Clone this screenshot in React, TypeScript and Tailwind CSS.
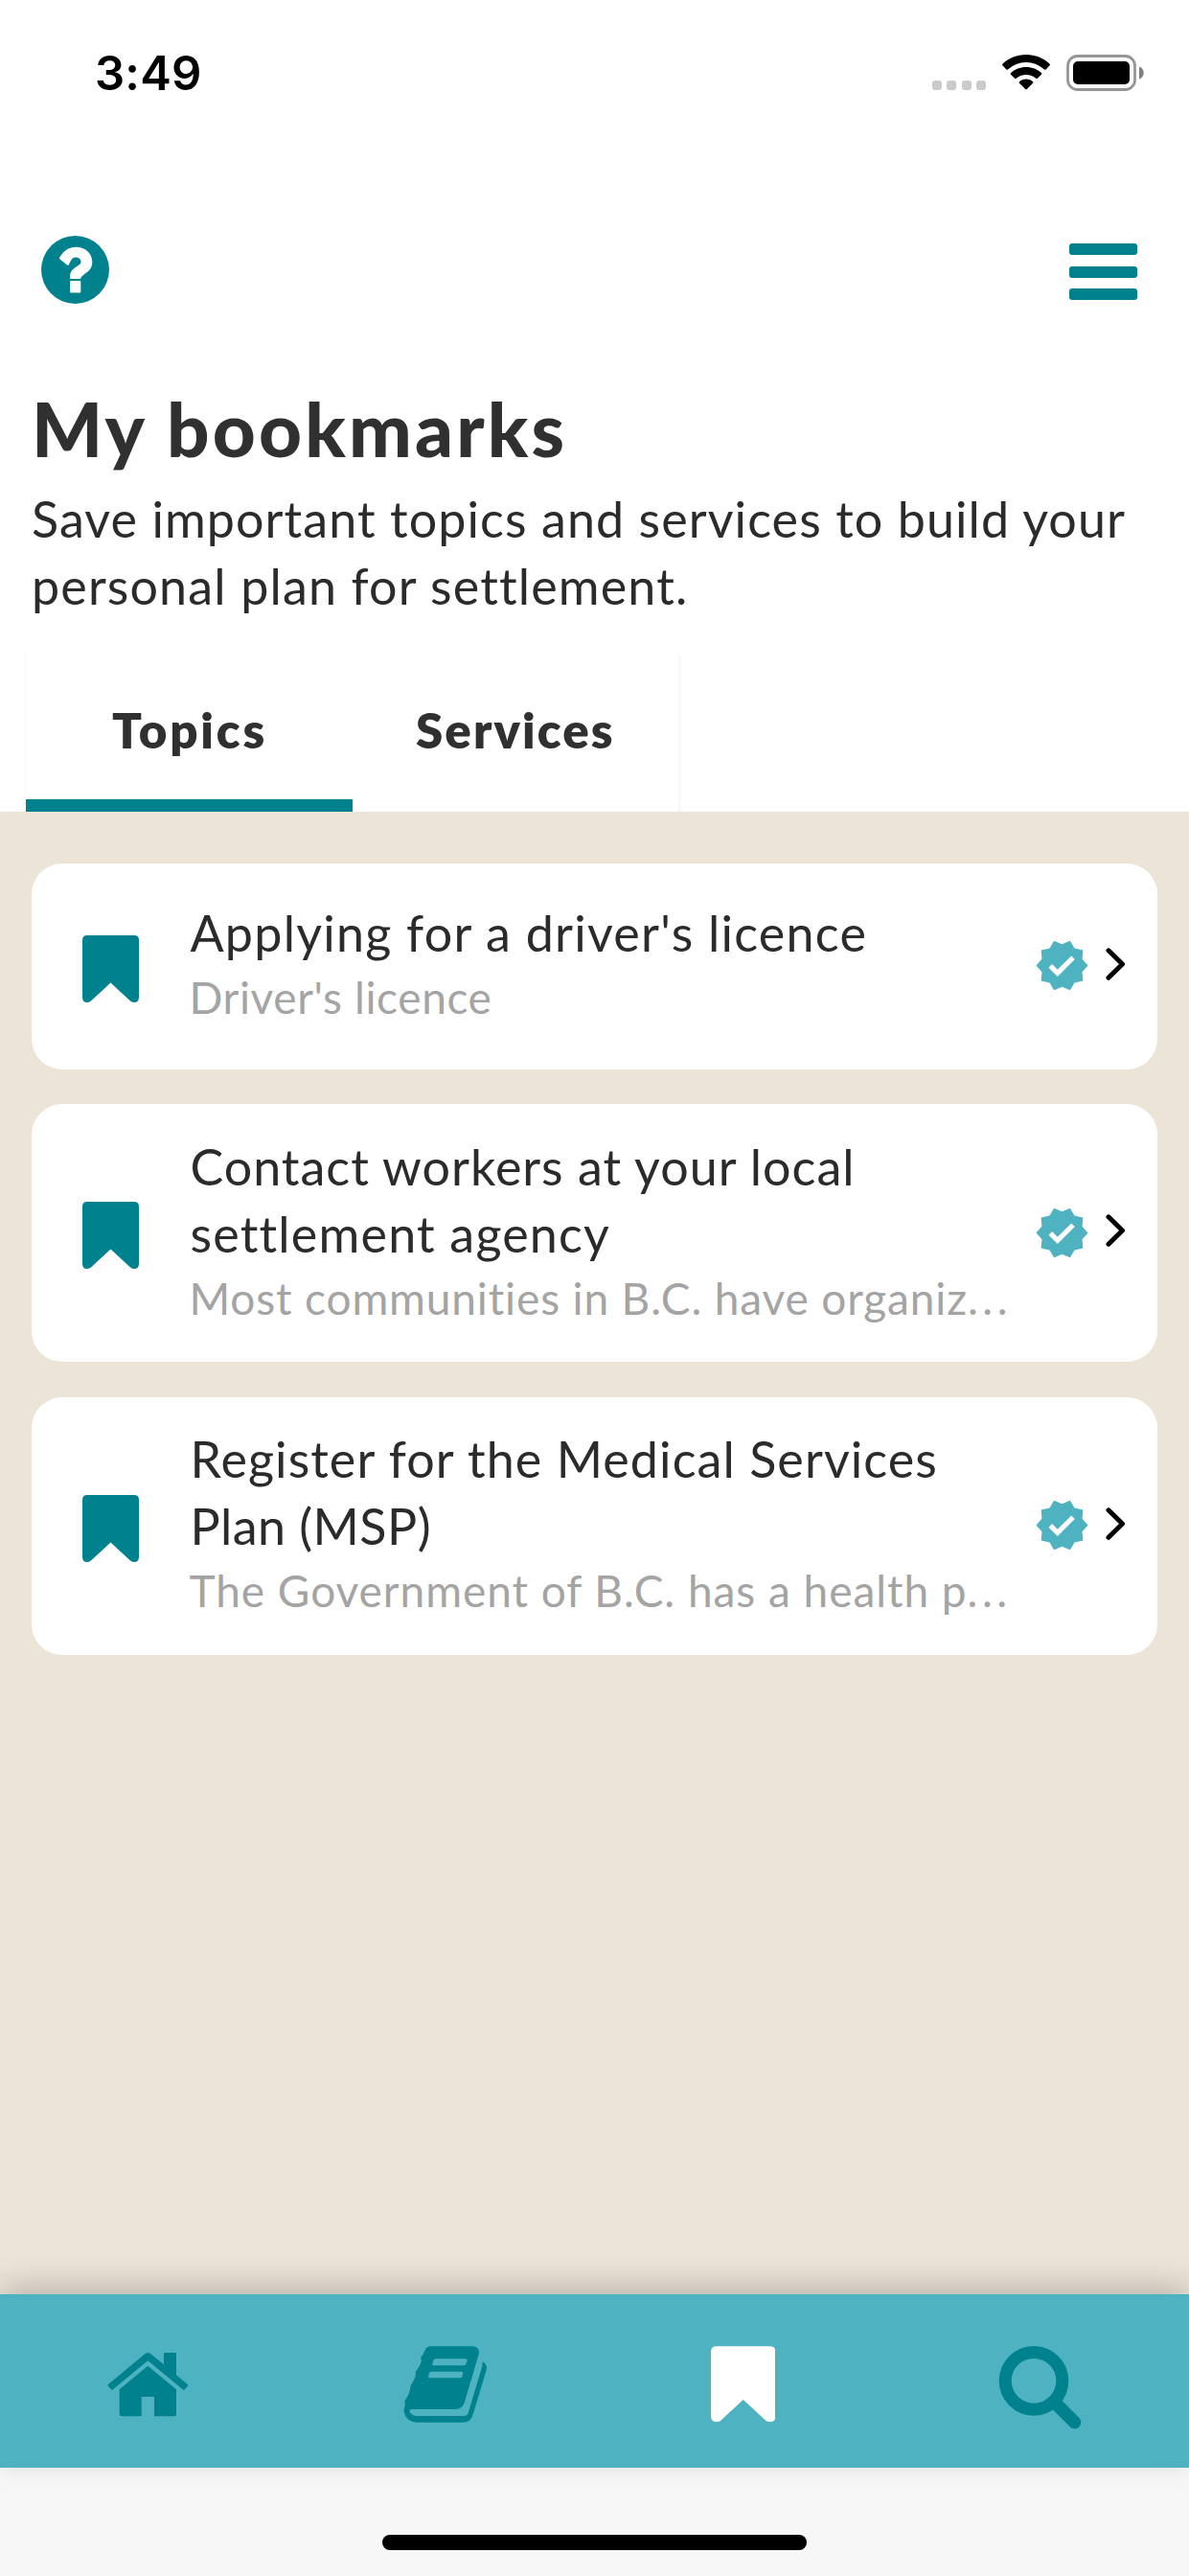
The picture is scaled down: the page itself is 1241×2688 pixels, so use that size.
import React from "react";
import { MdVerified } from "react-icons/md";

const TEAL = "#00828e";

type Line = { text: string; spacing: string };
type Bookmark = { title: Line[]; detail: Line; truncated?: boolean; height: string };

const bookmarks: Bookmark[] = [
  {
    title: [{ text: "Applying for a driver's licence", spacing: "tracking-[1.25px]" }],
    detail: { text: "Driver's licence", spacing: "tracking-[0.6px]" },
    height: "h-[215px]",
  },
  {
    title: [
      { text: "Contact workers at your local", spacing: "tracking-[1px]" },
      { text: "settlement agency", spacing: "tracking-[1.2px]" },
    ],
    detail: { text: "Most communities in B.C. have organiz", spacing: "tracking-[0.86px]" },
    truncated: true,
    height: "h-[269px]",
  },
  {
    title: [
      { text: "Register for the Medical Services", spacing: "tracking-[1.08px]" },
      { text: "Plan (MSP)", spacing: "tracking-[0.45px]" },
    ],
    detail: { text: "The Government of B.C. has a health p", spacing: "tracking-[0.96px]" },
    truncated: true,
    height: "h-[269px]",
  },
];

function StatusBar() {
  return (
    <div className="flex h-[150px] items-start justify-between pl-[99px] pr-[47px]">
      <span className="mt-[47px] font-['Inter'] text-[49px] font-semibold leading-[60px] tracking-[0.19px] text-black">
        3:49
      </span>
      <div className="mt-[57px] flex h-[38px] items-start">
        <div className="mt-[27px] flex gap-[5.4px]">
          {[0, 1, 2, 3].map((i) => (
            <span key={i} className="size-[10px] rounded-[3px] bg-[#cbcbcb]" />
          ))}
        </div>
        <svg className="ml-[17px]" width="50" height="37" viewBox="0 0 50 37">
          <path d="M25 0C34.500 0 43.200 3.600 49.600 9.700Q50.300 10.500 49.600 11.300L45.600 15.500Q44.800 16.200 44 15.500C39 10.800 32.300 7.900 25 7.900S11 10.800 6 15.500Q5.200 16.200 4.400 15.500L.4 11.300Q-.3 10.500 .4 9.700C6.800 3.600 15.500 0 25 0Z" />
          <path d="M25 13C31.200 13 36.800 15.300 41 19.100Q41.700 19.900 41 20.700L36.900 24.800Q36.100 25.500 35.300 24.800C32.600 22.400 29 20.900 25 20.900S17.400 22.400 14.700 24.800Q13.900 25.500 13.100 24.800L9 20.700Q8.300 19.900 9 19.100C13.200 15.300 18.800 13 25 13Z" />
          <path d="M25 25.500C27.700 25.500 30.200 26.500 32.100 28.200Q32.900 29 32.100 29.800L25.800 36.100Q25 36.900 24.200 36.100L17.900 29.800Q17.100 29 17.900 28.200C19.800 26.500 22.300 25.500 25 25.500Z" />
        </svg>
        <svg className="ml-[17px]" width="81" height="38" viewBox="0 0 81 38">
          <rect x="1.500" y="1.500" width="70" height="35" rx="10" fill="none" stroke="#969696" strokeWidth="2.800" />
          <rect x="7" y="7" width="59" height="24" rx="5" />
          <path d="M76 12.500C79 13.500 80.700 16 80.700 19S79 24.500 76 25.500Z" fill="#808080" />
        </svg>
      </div>
    </div>
  );
}

function TopBar() {
  return (
    <div className="flex h-[251px] items-start justify-between pl-[43px] pr-[54px]">
      <svg className="mt-[96px]" width="71" height="71" viewBox="0 0 71 71">
        <circle cx="35.500" cy="35.500" r="35.500" fill={TEAL} />
        <path
          fill="#fff"
          d="M19.400 22.200C23.500 15.500 29 11.700 36.500 11.700C46 11.700 53.300 18.500 53.300 27.300C53.300 34.500 49 37.500 45 40.200C42.500 42 41.700 43 41.500 44Q41.300 45 40.300 45H31.200Q30 45 30 44C29.700 39 31.500 35.800 36 32.800C39.500 30.500 41.500 29.800 41.500 27.300C41.500 24.500 39 22.600 35.800 22.600C32.500 22.600 31 25.500 28.900 30.200Q28.100 31.200 27 30.500L19.500 24.500Q18.500 23.500 19.400 22.200Z"
        />
        <rect x="30" y="47" width="11.300" height="12.500" rx="1" fill="#fff" />
      </svg>
      <div className="mt-[104px] flex w-[71px] flex-col gap-[11.800px]">
        <span className="h-[11.900px] rounded-[3px] bg-[#00828e]" />
        <span className="h-[11.900px] rounded-[3px] bg-[#00828e]" />
        <span className="h-[11.900px] rounded-[3px] bg-[#00828e]" />
      </div>
    </div>
  );
}

function Tabs() {
  return (
    <div className="ml-[27px] mt-[37px] flex h-[164px] w-[683px] border-r-2 border-[#f7f7f8] text-[51px] font-extrabold leading-[60px] text-[#303030] shadow-[-1px_0_0_#f8f8f8,0_1px_1px_rgba(0,0,0,0.12)]">
      <div className="w-[341px] border-b-[13px] border-[#00828e] pl-[90px] pt-[49px] tracking-[2.800px]">
        Topics
      </div>
      <div className="pl-[66px] pt-[49px] tracking-[2.100px]">Services</div>
    </div>
  );
}

function Card({ item }: { item: Bookmark }) {
  return (
    <div className={`flex w-full items-center rounded-[32px] bg-white pl-[53px] pr-[33px] ${item.height}`}>
      <svg className="mt-[5px] shrink-0" width="59" height="70" viewBox="0 0 59 70">
        <path
          fill={TEAL}
          d="M5 0H54Q59 0 59 5V64.500Q59 70 54 70Q51.500 70 49.500 68L29.500 49.500L9.500 68Q7.500 70 5 70Q0 70 0 64.500V5Q0 0 5 0Z"
        />
      </svg>
      <div className="ml-[53.500px] flex-1 whitespace-nowrap pb-[5px]">
        {item.title.map((line) => (
          <p key={line.text} className={`text-[52px] leading-[70px] text-[#2b2b2b] ${line.spacing}`}>
            {line.text}
          </p>
        ))}
        <p className={`-ml-px text-[46px] leading-[65px] text-[#a4a4a4] ${item.detail.spacing}`}>
          {item.detail.text}
          {item.truncated && <span className="tracking-[4.500px]">...</span>}
        </p>
      </div>
      <MdVerified className="-mt-px size-[59px] shrink-0 text-[#4eb2c0]" />
      <svg className="-mt-[5px] ml-[16px] shrink-0" width="21" height="34" viewBox="0 0 21 34">
        <path d="M3 2.800L17.500 17L3 31.200" fill="none" stroke="#000" strokeWidth="5" strokeLinecap="round" strokeLinejoin="round" />
      </svg>
    </div>
  );
}

function BottomNav() {
  return (
    <nav className="relative z-10 grid h-[181px] grid-cols-4 items-center justify-items-center bg-[#4eb2c0] pt-[7px] shadow-[0_-9px_30px_rgba(0,0,0,0.2)]">
      <svg className="mr-[2px]" width="85" height="68" viewBox="36 42 255 204" fill={TEAL}>
        <path d="M39 144L152 50Q163 40 174 50L213 82V49Q213 45 217 45H248Q252 45 252 49V115L287 144Q290 147 287 150L278 160Q275 163 272 160L163 70L54 160Q51 163 48 160L39 150Q36 147 39 144Z" />
        <path d="M163 86L252 160V237Q252 244 245 244H183V183H143V244H81Q74 244 74 237V160Z" />
      </svg>
      <svg className="mr-[2px]" width="87.300" height="81.300" viewBox="962 22 262 244" fill={TEAL} fillRule="evenodd">
        <path d="M1043 26H1178Q1203 28 1198 51L1153 203Q1147 222 1128 223H987Q979 226 983 233Q989 243 1001 244H1154Q1163 243 1165 235L1209 88L1210 74Q1226 82 1222 100L1179 243Q1171 264 1149 264H1003Q973 262 965 235Q962 218 968 208L966 197Q981 178 984 155Q983 150 988 144Q1000 124 1001 112Q998 106 1003 102Q1016 86 1019 70Q1015 64 1018 59Q1024 54 1029 39Q1034 28 1043 26ZM1063 65H1157Q1163 66 1162 71L1158 82Q1156 86 1151 86H1057Q1052 86 1053 81L1056 70Q1058 65 1063 65ZM1050 105H1144Q1150 106 1149 110L1146 121Q1144 125 1139 125H1044Q1039 125 1041 119L1043 110Q1045 105 1050 105Z" />
      </svg>
      <svg width="67.500" height="80" viewBox="0 0 68 80">
        <path
          fill="#fff"
          d="M6 0H62Q68 0 68 6V73Q68 79.500 62 79.500Q59 79.500 57 77.500L34 56L11 77.500Q9 79.500 6 79.500Q0 79.500 0 73V6Q0 0 6 0Z"
        />
      </svg>
      <svg className="mt-[6px]" width="88" height="88" viewBox="36 22 264 264" fill="none" stroke={TEAL}>
        <circle cx="147" cy="134" r="89.500" strokeWidth="39" />
        <path d="M215 204L275 264" strokeWidth="40" strokeLinecap="round" />
      </svg>
    </nav>
  );
}

export default function App() {
  return (
    <div className="flex h-[2688px] w-[1241px] flex-col overflow-hidden bg-white font-['Lato',sans-serif]">
      <StatusBar />
      <TopBar />
      <header>
        <h1 className="pl-[33px] text-[78px] font-black leading-[92px] tracking-[3.200px] text-[#303030]">
          My bookmarks
        </h1>
        <p className="mt-[13px] whitespace-nowrap pl-[33px] text-[52px] leading-[70px] text-[#2b2b2b]">
          <span className="block tracking-[1.080px]">Save important topics and services to build your</span>
          <span className="block tracking-[1.150px]">personal plan for settlement.</span>
        </p>
        <Tabs />
      </header>
      <main className="flex flex-1 flex-col gap-[36.500px] bg-[#ede4d8] px-[33px] pt-[53.500px]">
        {bookmarks.map((item) => (
          <Card key={item.detail.text} item={item} />
        ))}
      </main>
      <BottomNav />
      <footer className="flex h-[113px] justify-center bg-[#f7f7f7] pt-[70px]">
        <span className="h-[16px] w-[443px] rounded-full bg-black" />
      </footer>
    </div>
  );
}
